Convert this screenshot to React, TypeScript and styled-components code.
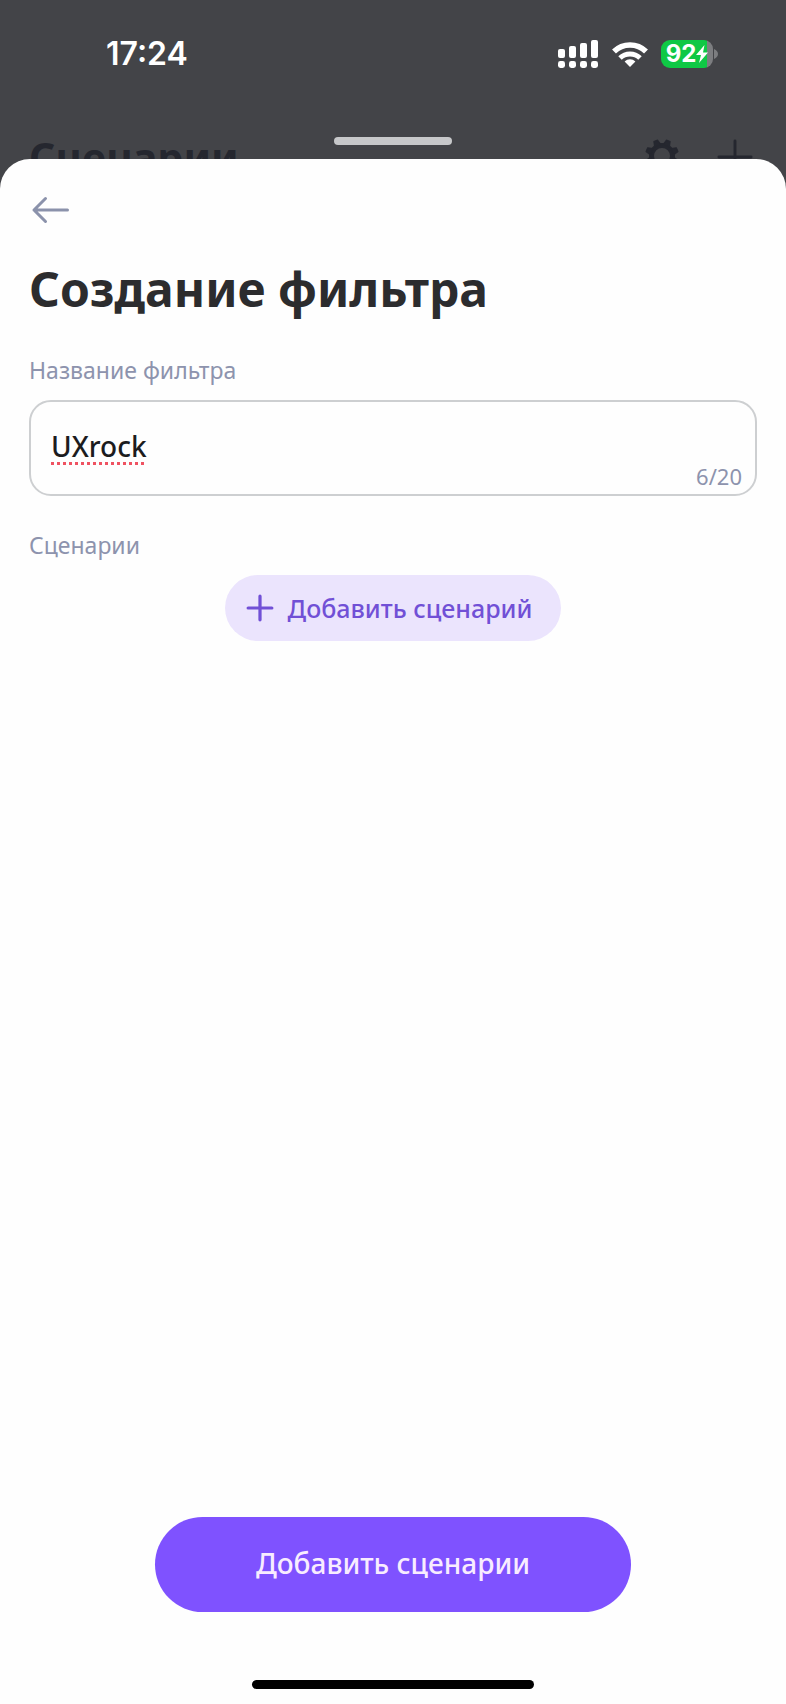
import React, { useState } from "react";
import styled, { createGlobalStyle } from "styled-components";

const GlobalStyle = createGlobalStyle`
  *, *::before, *::after { box-sizing: border-box; }
  html, body { margin: 0; padding: 0; background: #434448; }
  body, button, input { font-family: "Noto Sans", "Open Sans", sans-serif; }
`;

const Screen = styled.div`
  display: flex;
  flex-direction: column;
  min-height: 100vh;
  background: #434448;
`;

const StatusBar = styled.header`
  display: flex;
  align-items: center;
  justify-content: space-between;
  height: 108px;
  padding: 0 68px 0 106px;
  color: #fff;
`;

const Clock = styled.time`
  font: 600 32px/40px Inter, sans-serif;
`;

const StatusIcons = styled.div`
  display: flex;
  align-items: center;
  gap: 13px;

  svg { display: block; }
`;

const AppBar = styled.div`
  display: flex;
  align-items: center;
  justify-content: space-between;
  height: 98px;
  margin-bottom: -47px;
  padding: 0 32px 0 29px;
  color: #25272f;
`;

const AppBarTitle = styled.div`
  font-size: 41px;
  line-height: 56px;
  font-weight: 700;
`;

const AppBarActions = styled.div`
  display: flex;
  gap: 36px;
`;

const IconButton = styled.button`
  display: flex;
  padding: 0;
  border: 0;
  background: none;
  color: inherit;
  cursor: pointer;
`;

const Sheet = styled.main`
  position: relative;
  display: flex;
  flex: 1;
  flex-direction: column;
  padding: 32px 29px 15px;
  border-radius: 30px 30px 0 0;
  background: #fefefe;
`;

const Grabber = styled.div`
  position: absolute;
  top: -22px;
  left: 50%;
  width: 118px;
  height: 8px;
  border-radius: 4px;
  background: #c7c8ca;
  transform: translateX(-50%);
`;

const BackButton = styled(IconButton)`
  align-self: flex-start;
  color: #8b92ab;
`;

const Title = styled.h1`
  margin: 28px 0 0;
  color: #2c2c2e;
  font-size: 48px;
  line-height: 64px;
  font-weight: 700;
`;

const labelText = `
  display: block;
  margin: 33px 0 0;
  color: #8d93ad;
  font-size: 23px;
  line-height: 32px;
  font-weight: 400;
`;

const Label = styled.label`${labelText}`;
const SectionTitle = styled.h2`${labelText}`;

const Field = styled.div`
  position: relative;
  display: flex;
  height: 96px;
  margin-top: 14px;
  border: 2px solid #cdcfd1;
  border-radius: 22px;
`;

const TextInput = styled.input`
  flex: 1;
  min-width: 0;
  padding: 0 20px 4px;
  border: 0;
  outline: 0;
  background: none;
  color: #1c1c1e;
  font-size: 28px;
  font-weight: 500;
  text-decoration: underline dotted #ef5261 3px;
  text-underline-offset: 5px;
`;

const Counter = styled.span`
  position: absolute;
  right: 13px;
  bottom: 4px;
  color: #8d93ad;
  font-size: 22px;
  line-height: 28px;
`;

const PillButton = styled.button<{ $primary?: boolean }>`
  display: flex;
  align-items: center;
  align-self: center;
  justify-content: center;
  gap: 14px;
  width: ${(p) => (p.$primary ? "476px" : "336px")};
  max-width: 100%;
  height: ${(p) => (p.$primary ? "95px" : "66px")};
  padding: ${(p) => (p.$primary ? "0 8px 4px" : "0 8px 0 0")};
  border: 0;
  border-radius: 48px;
  background: ${(p) => (p.$primary ? "#7f52ff" : "#ebe4fd")};
  color: ${(p) => (p.$primary ? "#f8ecff" : "#7150d6")};
  font-size: ${(p) => (p.$primary ? "28px" : "25px")};
  font-weight: 500;
  white-space: nowrap;
  cursor: pointer;
`;

const AddRow = styled.div`
  display: flex;
  justify-content: center;
  margin-top: 14px;
`;

const Footer = styled.footer`
  display: flex;
  flex-direction: column;
  align-items: center;
  gap: 68px;
  margin-top: auto;
`;

const HomeIndicator = styled.div`
  width: 282px;
  height: 9px;
  border-radius: 5px;
  background: #000;
`;

const SignalIcon = () => (
  <svg width="41" height="28" viewBox="0 0 41 28" fill="#fff" aria-hidden="true">
    {[9, 6, 3, 0].map((y, i) => (
      <g key={y}>
        <rect x={i * 11} y={y} width="7" height={18 - y} rx="2" />
        <rect x={i * 11} y="21" width="7" height="7" rx="2.4" />
      </g>
    ))}
  </svg>
);

const WifiIcon = () => (
  <svg width="36" height="26" viewBox="0 0 36 26" fill="none" stroke="#fff" strokeWidth="5.6" aria-hidden="true">
    <path d="M2 10.5a23 23 0 0 1 32 0" />
    <path d="M8 17a14.500 14.500 0 0 1 20 0" strokeWidth="5" />
    <path d="M18 26l-5.400-5.600a8 8 0 0 1 10.800 0z" fill="#fff" stroke="none" />
  </svg>
);

const BatteryShell = styled.div`
  display: flex;
  align-items: center;
  gap: 1px;
`;

const BatteryLevel = styled.div`
  display: flex;
  align-items: center;
  justify-content: center;
  width: 52px;
  height: 28px;
  border-radius: 9px;
  background: linear-gradient(to right, #0fc845 46px, #7c7d80 46px);
  color: #fff;
  font: 700 24px/28px Inter, sans-serif;
`;

const Battery = () => (
  <BatteryShell>
    <BatteryLevel>
      <span>92</span>
      <svg width="12" height="18" viewBox="0 0 12 18" aria-hidden="true">
        <path d="M8.500 0L0 10h5L3 18 12 7.500H7z" fill="#fff" />
      </svg>
    </BatteryLevel>
    <svg width="4" height="10" viewBox="0 0 4 10" aria-hidden="true">
      <path d="M0 0q4 2 4 5t-4 5z" fill="#7c7d80" />
    </svg>
  </BatteryShell>
);

const GearIcon = () => (
  <svg width="36" height="36" viewBox="0 0 36 36" fill="none" stroke="currentColor" aria-hidden="true">
    <circle cx="18" cy="18" r="10.5" strokeWidth="5" />
    {Array.from({ length: 8 }, (_, i) => (
      <path
        key={i}
        d="M14.500 7l1.500-5.500h4l1.500 5.500z"
        fill="currentColor"
        strokeWidth="1"
        strokeLinejoin="round"
        transform={`rotate(${i * 45 + 22.5} 18 18)`}
      />
    ))}
  </svg>
);

const PlusIcon = ({ size, weight }: { size: number; weight: number }) => (
  <svg width={size} height={size} viewBox="0 0 26 26" fill="none" stroke="currentColor" strokeWidth={weight} strokeLinecap="round" aria-hidden="true">
    <path d="M13 2v22M2 13h22" />
  </svg>
);

const ArrowIcon = () => (
  <svg width="42" height="38" viewBox="0 0 42 38" fill="none" stroke="currentColor" strokeWidth="3" strokeLinecap="round" strokeLinejoin="round" aria-hidden="true">
    <path d="M38.500 19H5M16.500 7.500L5 19l11.500 11.500" />
  </svg>
);

export default function App() {
  const [name, setName] = useState("UXrock");

  return (
    <>
      <GlobalStyle />
      <Screen>
        <StatusBar>
          <Clock>17:24</Clock>
          <StatusIcons>
            <SignalIcon />
            <WifiIcon />
            <Battery />
          </StatusIcons>
        </StatusBar>
        <AppBar>
          <AppBarTitle>Сценарии</AppBarTitle>
          <AppBarActions>
            <IconButton type="button" aria-label="Настройки"><GearIcon /></IconButton>
            <IconButton type="button" aria-label="Добавить"><PlusIcon size={38} weight={2} /></IconButton>
          </AppBarActions>
        </AppBar>
        <Sheet>
          <Grabber />
          <BackButton type="button" aria-label="Назад"><ArrowIcon /></BackButton>
          <Title>Создание фильтра</Title>
          <Label htmlFor="filter-name">Название фильтра</Label>
          <Field>
            <TextInput
              id="filter-name"
              type="text"
              maxLength={20}
              spellCheck={false}
              value={name}
              onChange={(e) => setName(e.target.value)}
            />
            <Counter>{name.length}/20</Counter>
          </Field>
          <SectionTitle>Сценарии</SectionTitle>
          <AddRow>
            <PillButton type="button">
              <PlusIcon size={28} weight={3} />
              Добавить сценарий
            </PillButton>
          </AddRow>
          <Footer>
            <PillButton type="button" $primary>Добавить сценарии</PillButton>
            <HomeIndicator />
          </Footer>
        </Sheet>
      </Screen>
    </>
  );
}
